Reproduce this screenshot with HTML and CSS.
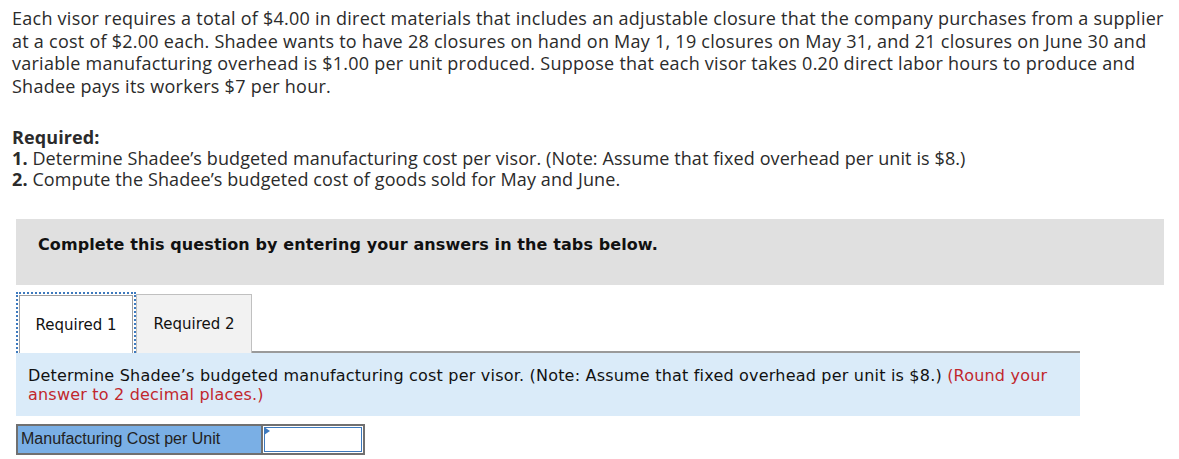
FILE: index.html
```html
<!DOCTYPE html>
<html>
<head>
<meta charset="utf-8">
<link rel="stylesheet" href="styles.css">
</head>
<body>
<div class="page">
  <p class="intro">Each visor requires a total of $4.00 in direct materials that includes an adjustable closure that the company purchases from a supplier at a cost of $2.00 each. Shadee wants to have 28 closures on hand on May 1, 19 closures on May 31, and 21 closures on June 30 and variable manufacturing overhead is $1.00 per unit produced. Suppose that each visor takes 0.20 direct labor hours to produce and Shadee pays its workers $7 per hour.</p>
  <div class="required">
    <div class="req-title">Required:</div>
    <div><b>1.</b> Determine Shadee’s budgeted manufacturing cost per visor. (Note: Assume that fixed overhead per unit is $8.)</div>
    <div><b>2.</b> Compute the Shadee’s budgeted cost of goods sold for May and June.</div>
  </div>
  <div class="notice">Complete this question by entering your answers in the tabs below.</div>
  <div class="tabs">
    <div class="tab active"><span class="tab-inner">Required 1</span></div>
    <div class="tab">Required 2</div>
    <div class="tab-fill"></div>
  </div>
  <div class="panel">Determine Shadee’s budgeted manufacturing cost per visor. (Note: Assume that fixed overhead per unit is $8.) <span class="red">(Round your answer to 2 decimal places.)</span></div>
  <div class="answer">
    <div class="label">Manufacturing Cost per Unit</div>
    <div class="input"><span class="flag"></span></div>
  </div>
</div>
</body>
</html>
```

FILE: styles.css
```css
html, body { margin: 0; padding: 0; background: #fff; }
.page { padding: 7px 0 0 12px; width: 1160px; }
.intro {
  margin: 0;
  font-family: "Open Sans", sans-serif;
  font-size: 18px;
  letter-spacing: 0.25px;
  line-height: 22.5px;
  color: #2b2b2b;
}
.required {
  margin-top: 30px;
  font-family: "Open Sans", sans-serif;
  font-size: 18px;
  letter-spacing: 0.1px;
  line-height: 21px;
  color: #2b2b2b;
}
.req-title { font-weight: bold; }
.notice {
  margin: 29px 0 0 4px;
  width: 1148px;
  height: 66px;
  box-sizing: border-box;
  padding: 16px 22px;
  background: #e0e0e0;
  font-family: "DejaVu Sans", Verdana, sans-serif;
  font-weight: bold;
  font-size: 16px;
  letter-spacing: 0.1px;
  line-height: 20px;
  color: #111;
}
.tabs {
  display: flex;
  align-items: flex-end;
  margin: 7px 0 0 4px;
  width: 1064px;
  height: 61px;
}
.tab {
  box-sizing: border-box;
  width: 116px;
  height: 59px;
  border: 1px solid #c0c0c0;
  border-bottom: none;
  background: #f2f2f2;
  display: flex;
  align-items: center;
  justify-content: center;
  font-family: "DejaVu Sans", Verdana, sans-serif;
  font-size: 15px;
  color: #111;
}
.tab.active {
  width: 120px;
  height: 61px;
  background: #fff;
  border: 2px dotted #3d79bd;
  border-bottom: none;
  padding: 1px 1px 0 1px;
}
.tab-inner {
  box-sizing: border-box;
  width: 100%;
  height: 100%;
  border: 1px solid #a0a0a0;
  border-bottom: none;
  display: flex;
  align-items: center;
  justify-content: center;
}
.tab-fill {
  flex: 1;
  border-bottom: 2px solid #9a9a9a;
  height: 0;
}
.panel {
  margin-left: 4px;
  width: 1064px;
  height: 63px;
  box-sizing: border-box;
  padding: 13px 12px;
  background: #daebf9;
  font-family: "DejaVu Sans", Verdana, sans-serif;
  font-size: 16px;
  letter-spacing: 0.2px;
  line-height: 19px;
  color: #111;
}
.red { color: #c1272d; }
.answer {
  display: flex;
  margin: 8px 0 0 4px;
  width: 349px;
  height: 31px;
  box-sizing: border-box;
  border: 2px solid #707070;
}
.label {
  width: 245px;
  box-sizing: border-box;
  background: #7aafe5;
  border-right: 2px solid #707070;
  padding: 4px 3px;
  font-family: "Liberation Sans", Arial, sans-serif;
  font-size: 16px;
  color: #222;
}
.input {
  flex: 1;
  position: relative;
  background: #fff;
  border: 1px solid #3d79bd;
  margin: 1px;
}
.flag {
  position: absolute;
  left: -1px;
  top: -1px;
  width: 0;
  height: 0;
  border-top: 4px solid transparent;
  border-bottom: 4px solid transparent;
  border-left: 6px solid #3d79bd;
}
```
